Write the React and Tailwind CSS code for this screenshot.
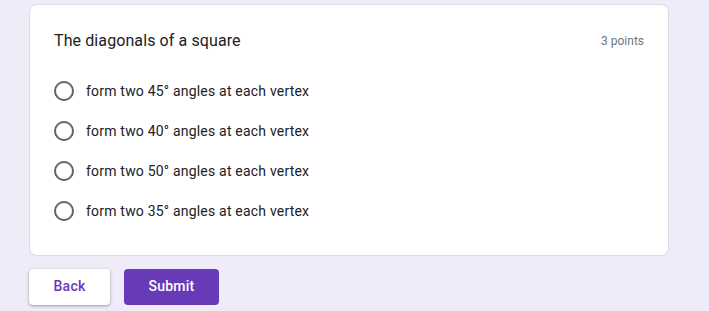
import { useState } from 'react'

const options = [
  'form two 45° angles at each vertex',
  'form two 40° angles at each vertex',
  'form two 50° angles at each vertex',
  'form two 35° angles at each vertex',
]

export default function App() {
  const [picked, setPicked] = useState(null)

  return (
    <div
      className="min-h-[311px] w-[709px] bg-[#f0ebf8] pl-[29px] pt-[4px]"
      style={{ fontFamily: 'Roboto, "Liberation Sans", sans-serif' }}
    >
      {/* question card */}
      <div className="w-[640px] rounded-lg border border-[#dadce0] bg-white px-6 pt-6 pb-6">
        <div className="flex items-center justify-between">
          <h2 className="text-[16px] leading-6 tracking-[0.1px] text-[#202124]">The diagonals of a square</h2>
          <span className="text-[12px] text-[#70757a]">3 points</span>
        </div>

        <div className="mt-[18px]">
          {options.map((opt, i) => (
            <label key={opt} className="flex h-10 cursor-pointer items-center gap-3" onClick={() => setPicked(i)}>
              <span className="flex h-5 w-5 items-center justify-center rounded-full border-2 border-[#5f6368]">
                {picked === i && <span className="h-2.5 w-2.5 rounded-full bg-[#673ab7]" />}
              </span>
              <span className="text-[14px] tracking-[0.2px] text-[#202124]">{opt}</span>
            </label>
          ))}
        </div>
      </div>

      {/* buttons */}
      <div className="mt-[13px] flex gap-[14px]">
        <button className="h-9 w-[81px] rounded bg-white pb-0.5 text-[14px] font-medium tracking-[0.25px] text-[#673ab7] shadow-[0_1px_2px_rgba(60,64,67,0.3),0_1px_3px_1px_rgba(60,64,67,0.15)]">
          Back
        </button>
        <button className="h-9 w-[95px] rounded bg-[#673ab7] pb-0.5 text-[14px] font-medium tracking-[0.25px] text-white">
          Submit
        </button>
      </div>
    </div>
  )
}
